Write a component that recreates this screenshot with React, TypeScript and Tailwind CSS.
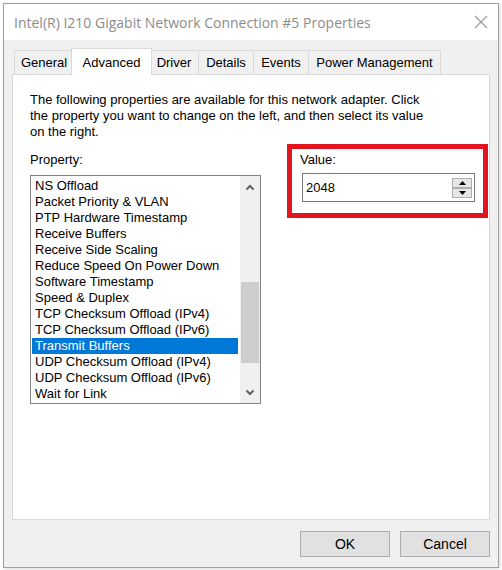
import React from "react";

const items = [
  "NS Offload",
  "Packet Priority & VLAN",
  "PTP Hardware Timestamp",
  "Receive Buffers",
  "Receive Side Scaling",
  "Reduce Speed On Power Down",
  "Software Timestamp",
  "Speed & Duplex",
  "TCP Checksum Offload (IPv4)",
  "TCP Checksum Offload (IPv6)",
  "Transmit Buffers",
  "UDP Checksum Offload (IPv4)",
  "UDP Checksum Offload (IPv6)",
  "Wait for Link",
];

const tabs = [
  { label: "General", w: "w-[60px]" },
  { label: "Advanced", w: "w-[81px]", active: true },
  { label: "Driver", w: "w-[50px]" },
  { label: "Details", w: "w-[56px]" },
  { label: "Events", w: "w-[56px]" },
  { label: "Power Management", w: "w-[133px]" },
];

const Chevron = ({ up }: { up?: boolean }) => (
  <svg width="10" height="7" viewBox="0 0 10 7">
    <polyline
      points={up ? "1.5,5.5 5,2 8.5,5.5" : "1.5,1.5 5,5 8.5,1.5"}
      fill="none"
      stroke="#606060"
      strokeWidth="2"
    />
  </svg>
);

const SpinBtn = ({ up }: { up?: boolean }) => (
  <div className="flex h-[10px] w-[20px] items-center justify-center border border-[#adadad] bg-[#e6e6e6]">
    <svg width="7" height="4" viewBox="0 0 7 4">
      <polygon points={up ? "0,4 3.5,0 7,4" : "0,0 3.5,4 7,0"} fill="#000" />
    </svg>
  </div>
);

export default function App() {
  return (
    <div className="h-[570px] w-[502px] bg-white pl-[3px] pt-[3px] font-['Liberation_Sans',Arial,sans-serif] text-[13px] text-black">
      <div className="flex h-[565px] w-[496px] flex-col border border-[#a0a0a0] bg-[#f0f0f0] shadow-[1px_1px_3px_rgba(0,0,0,0.15)]">
        {/* title bar */}
        <div className="flex h-[36px] items-center justify-between bg-white pl-[10px] pr-[8px]">
          <span className="font-['Open_Sans','Noto_Sans',sans-serif] text-[14px] text-[#8c8c8c]">
            Intel(R) I210 Gigabit Network Connection #5 Properties
          </span>
          <svg width="16" height="16" viewBox="0 0 16 16" className="mr-[1px]">
            <path d="M2 2 L14 14 M14 2 L2 14" stroke="#9a9a9a" strokeWidth="1.2" />
          </svg>
        </div>

        <div className="flex flex-1 flex-col px-[8px] pt-[8px]">
          {/* tabs */}
          <div className="flex h-[26px] items-end pl-[2px]">
            {tabs.map((t) =>
              t.active ? (
                <div
                  key={t.label}
                  className={`relative z-10 -mb-px -ml-[3px] -mr-[2px] flex h-[27px] items-start justify-center border border-b-0 border-[#d9d9d9] bg-white pt-[4px] ${t.w}`}
                >
                  {t.label}
                </div>
              ) : (
                <div
                  key={t.label}
                  className={`-ml-px flex h-[24px] items-center justify-center border border-b-0 border-[#d9d9d9] bg-[#f0f0f0] first:ml-0 ${t.w}`}
                >
                  {t.label}
                </div>
              )
            )}
          </div>

          {/* panel */}
          <div className="flex h-[446px] flex-col border border-[#d9d9d9] bg-white pl-[17px] pr-[1px] pt-[17px]">
            <p className="leading-[16px]">
              The following properties are available for this network adapter. Click
              <br />
              the property you want to change on the left, and then select its value
              <br />
              on the right.
            </p>

            <div className="mt-[4px] flex items-start gap-[26px]">
              {/* property list */}
              <div className="mt-[8px] flex shrink-0 flex-col">
                <span className="leading-[16px]">Property:</span>
                <div className="mt-[7px] flex h-[229px] w-[231px] border border-[#828282] bg-white">
                  <div className="flex flex-1 flex-col pl-[1px] pr-[2px] pt-[2px]">
                    {items.map((it) => (
                      <div
                        key={it}
                        className={`h-[16px] whitespace-nowrap pl-[3px] leading-[16px] ${
                          it === "Transmit Buffers" ? "bg-[#0078d7] text-white" : ""
                        }`}
                      >
                        {it}
                      </div>
                    ))}
                  </div>
                  <div className="flex w-[20px] flex-col bg-[#f0f0f0]">
                    <div className="flex h-[20px] items-center justify-center pt-[2px]">
                      <Chevron up />
                    </div>
                    <div className="flex-1 px-[1px]">
                      <div className="mt-[86px] h-[81px] bg-[#cdcdcd]" />
                    </div>
                    <div className="flex h-[20px] items-center justify-center pb-[2px]">
                      <Chevron />
                    </div>
                  </div>
                </div>
              </div>

              {/* value group, highlighted */}
              <div className="flex w-[201px] shrink-0 flex-col border-[5px] border-[#e2141f] pb-[11px] pl-[8px] pr-[8px] pt-[3px]">
                <span className="leading-[16px]">Value:</span>
                <div className="ml-[2px] mt-[5px] flex h-[29px] items-center justify-between border border-[#7a7a7a] bg-white pl-[3px] pr-[2px]">
                  <span>2048</span>
                  <div className="flex flex-col">
                    <SpinBtn up />
                    <SpinBtn />
                  </div>
                </div>
              </div>
            </div>
          </div>

          {/* buttons */}
          <div className="mt-[11px] flex justify-end gap-[10px]">
            <button className="flex h-[26px] w-[90px] items-center justify-center border border-[#adadad] bg-[#e1e1e1] text-[14px]">
              OK
            </button>
            <button className="flex h-[26px] w-[90px] items-center justify-center border border-[#adadad] bg-[#e1e1e1] text-[14px]">
              Cancel
            </button>
          </div>
        </div>
      </div>
    </div>
  );
}
